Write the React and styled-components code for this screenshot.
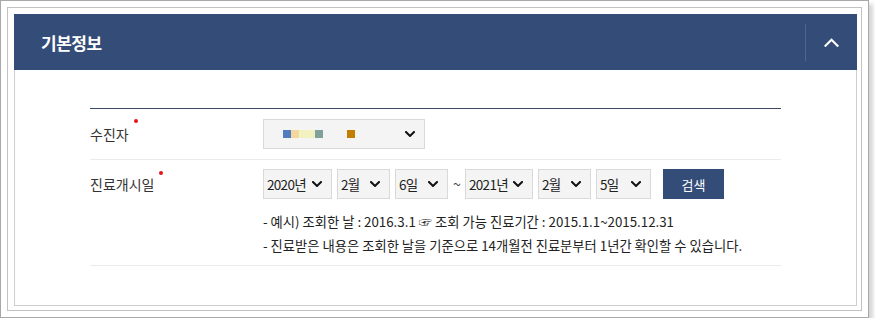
import React from 'react';
import styled, { createGlobalStyle } from 'styled-components';

const GlobalStyle = createGlobalStyle`
    body {
        margin: 0;
        background: #fff;
        font-family: "Noto Sans CJK KR", "Noto Sans", sans-serif;
        color: #333;
    }
`;

const Chevron = ({ up, color = '#111', size = 10 }) => (
    <svg width={size} height={size * 0.6} viewBox="0 0 10 6" fill="none">
        <path
            d={up ? 'M1 5.2L5 1.2L9 5.2' : 'M1 1L5 5L9 1'}
            stroke={color}
            strokeWidth={up ? 1.4 : 2}
            strokeLinecap="square"
        />
    </svg>
);

const SelectBox = ({ value, width, children }) => (
    <Select $width={width}>
        <span>{children || value}</span>
        <Chevron />
    </Select>
);

const App = () => {
    return (
        <>
            <GlobalStyle />
            <Frame>
                <Inner>
                    <Panel>
                        <Header>
                            <h2>기본정보</h2>
                            <Toggle>
                                <Chevron up color="#fff" size={15} />
                            </Toggle>
                        </Header>
                        <Body>
                            <Table>
                                <Row $height={50}>
                                    <Label $center>수진자</Label>
                                    <Field>
                                        <SelectBox width={162}>
                                            <NameBlur>
                                                <Swatch $c="#4f7dbf" />
                                                <Swatch $c="#f3d79f" />
                                                <Swatch $c="#f3f1c0" $w={16} />
                                                <Swatch $c="#80a09b" />
                                                <Swatch $c="transparent" $w={24} />
                                                <Swatch $c="#c07f00" />
                                            </NameBlur>
                                        </SelectBox>
                                    </Field>
                                </Row>
                                <Row $height={105}>
                                    <Label>진료개시일</Label>
                                    <Field $column>
                                        <DateLine>
                                            <SelectBox value="2020년" width={69} />
                                            <SelectBox value="2월" width={53} />
                                            <SelectBox value="6일" width={53} />
                                            <Tilde>~</Tilde>
                                            <SelectBox value="2021년" width={68} />
                                            <SelectBox value="2월" width={53} />
                                            <SelectBox value="5일" width={55} />
                                            <SearchBtn>검색</SearchBtn>
                                        </DateLine>
                                        <Notes>
                                            <li>- 예시) 조회한 날 : 2016.3.1 ☞ 조회 가능 진료기간 : 2015.1.1~2015.12.31</li>
                                            <li>- 진료받은 내용은 조회한 날을 기준으로 14개월전 진료분부터 1년간 확인할 수 있습니다.</li>
                                        </Notes>
                                    </Field>
                                </Row>
                            </Table>
                        </Body>
                    </Panel>
                </Inner>
            </Frame>
        </>
    );
};

const Frame = styled.div`
    width: 869px;
    box-sizing: border-box;
    border: 1px solid #a8a8a8;
    padding: 6px;
    background: #fff;
    box-shadow: 4px 4px 4px #d6d6d6;
`;

const Inner = styled.div`
    border: 1px solid #c2c2c2;
    padding: 6px 4px 4px 6px;
`;

const Panel = styled.div`
    display: flex;
    flex-direction: column;
`;

const Header = styled.div`
    height: 56px;
    background: #344d78;
    display: flex;
    align-items: center;
    justify-content: space-between;
    padding-left: 27px;

    h2 {
        margin: 0;
        color: #fff;
        font-size: 17px;
        font-weight: bold;
        letter-spacing: -0.5px;
    }
`;

const Toggle = styled.div`
    width: 51px;
    height: 37px;
    border-left: 1px solid #4d6590;
    display: flex;
    align-items: center;
    justify-content: center;
`;

const Body = styled.div`
    height: 236px;
    box-sizing: border-box;
    border: 1px solid #cfcfcf;
    border-top: none;
    padding: 38px 75px 0 75px;
`;

const Table = styled.div`
    border-top: 1px solid #3d4a66;
`;

const Row = styled.div`
    display: flex;
    height: ${p => p.$height}px;
    border-bottom: 1px solid #ebebeb;
`;

const Label = styled.div`
    width: 173px;
    flex-shrink: 0;
    font-size: 14px;
    color: #333;
    display: flex;
    align-items: ${p => (p.$center ? 'center' : 'flex-start')};
    padding-top: ${p => (p.$center ? '0' : '14px')};
    box-sizing: border-box;

    &::after {
        content: '';
        width: 4px;
        height: 4px;
        border-radius: 50%;
        background: #e8141b;
        align-self: flex-start;
        margin-top: ${p => (p.$center ? '10px' : '-3px')};
        margin-left: 5px;
    }
`;

const Field = styled.div`
    flex: 1;
    display: flex;
    flex-direction: ${p => (p.$column ? 'column' : 'row')};
    align-items: ${p => (p.$column ? 'flex-start' : 'center')};
    padding-top: ${p => (p.$column ? '9px' : '0')};
`;

const Select = styled.div`
    width: ${p => p.$width}px;
    height: 30px;
    box-sizing: border-box;
    background: #f4f4f4;
    border: 1px solid #d9d9d9;
    display: flex;
    align-items: center;
    justify-content: space-between;
    padding: 0 9px 0 3px;
    font-size: 13.5px;
    color: #222;
    flex-shrink: 0;

    span {
        display: flex;
        align-items: center;
        letter-spacing: -0.7px;
    }
`;

const NameBlur = styled.div`
    display: flex;
    padding-left: 16px;
`;

const Swatch = styled.i`
    width: ${p => p.$w || 8}px;
    height: 8px;
    background: ${p => p.$c};
`;

const DateLine = styled.div`
    display: flex;
    align-items: center;
    gap: 5px;
`;

const Tilde = styled.span`
    width: 7px;
    font-size: 14px;
    color: #444;
    text-align: center;
`;

const SearchBtn = styled.button`
    width: 61px;
    height: 30px;
    margin-left: 7px;
    border: none;
    background: #344d78;
    color: #fff;
    font-family: inherit;
    font-size: 13px;
    cursor: pointer;
`;

const Notes = styled.ul`
    list-style: none;
    margin: 11px 0 0 0;
    padding: 0;
    font-size: 13.3px;
    color: #222;

    li {
        line-height: 24px;
    }
`;

export default App;
